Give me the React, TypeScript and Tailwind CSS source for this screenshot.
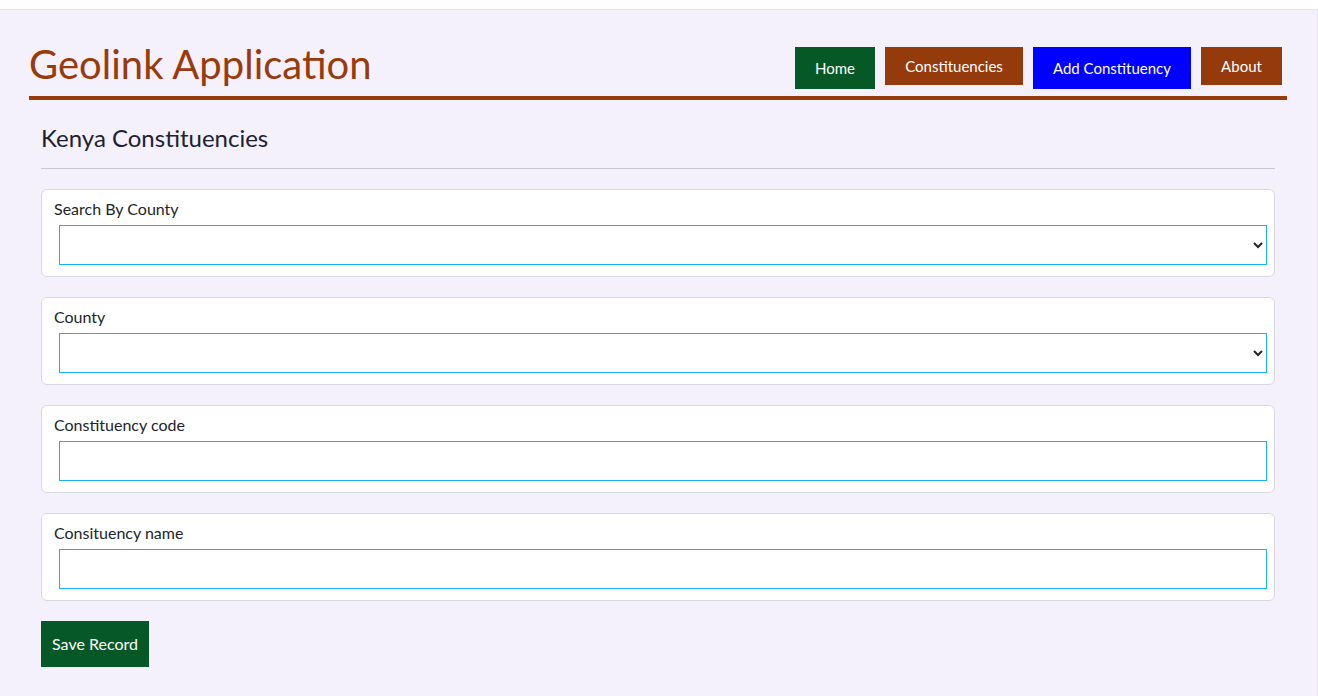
const fields = [
  { label: "Search By County", type: "select" },
  { label: "County", type: "select" },
  { label: "Constituency code", type: "input" },
  { label: "Consituency name", type: "input" },
];

const NavButton = ({ label, className }: { label: string; className: string }) => (
  <button
    type="button"
    className={`flex items-center justify-center text-[15px] text-white ${className}`}
  >
    {label}
  </button>
);

const App = () => {
  return (
    <div className="min-h-screen bg-white pt-[9px] font-['Lato','Noto_Sans',sans-serif] text-[#212529]">
      <div className="min-h-[687px] border-r border-t border-[#dfe4f0] bg-[#f4f0fc]">
        {/* Header */}
        <header className="ml-[29px] mr-[30px] flex items-start justify-between border-b-4 border-[#993b0c] pb-[7px] pt-[30px]">
          <h1 className="h-[48px] text-[40px] leading-[48px] text-[#9a3a0b]">Geolink Application</h1>
          <nav className="mr-[5px] mt-[7px] flex items-start gap-[10px]">
            <NavButton label="Home" className="h-[42px] w-[80px] bg-[#065926]" />
            <NavButton label="Constituencies" className="h-[38px] w-[138px] bg-[#953a0b]" />
            <NavButton label="Add Constituency" className="h-[42px] w-[158px] bg-[#0000ff]" />
            <NavButton label="About" className="h-[38px] w-[81px] bg-[#953a0b]" />
          </nav>
        </header>

        {/* Form */}
        <main className="ml-[41px] mr-[42px] pt-[22px]">
          <h2 className="text-[24px] leading-[32px] text-[#1d2131]">Kenya Constituencies</h2>
          <hr className="mt-[14px] border-[#c9c5d3]" />

          <form className="mt-5 flex flex-col gap-5" onSubmit={(e) => e.preventDefault()}>
            {fields.map((f) => (
              <div
                key={f.label}
                className="flex flex-col rounded-md border border-[#d9d9e0] bg-white pb-[11px] pl-3 pr-[7px] pt-[7px]"
              >
                <label className="text-base leading-6">{f.label}</label>
                {f.type === "select" ? (
                  <select className="ml-[5px] mt-1 h-10 border border-[#17b1f3] bg-white px-2 text-base outline-none">
                    <option value=""></option>
                  </select>
                ) : (
                  <input
                    type="text"
                    className="ml-[5px] mt-1 h-10 border border-[#17b1f3] bg-white px-2 text-base outline-none"
                  />
                )}
              </div>
            ))}
            <div>
              <button
                type="submit"
                className="h-[46px] w-[108px] bg-[#065926] text-base text-white"
              >
                Save Record
              </button>
            </div>
          </form>
        </main>
      </div>
    </div>
  );
};

export default App;
